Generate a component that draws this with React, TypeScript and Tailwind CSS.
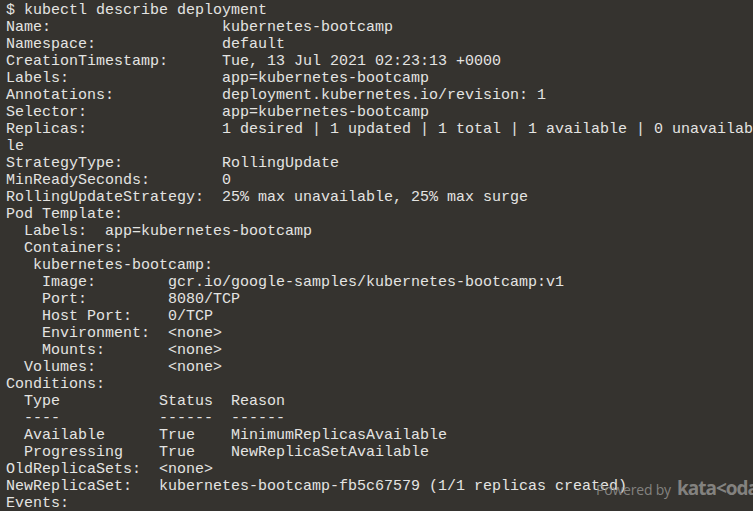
const lines = [
  '$ kubectl describe deployment',
  'Name:                   kubernetes-bootcamp',
  'Namespace:              default',
  'CreationTimestamp:      Tue, 13 Jul 2021 02:23:13 +0000',
  'Labels:                 app=kubernetes-bootcamp',
  'Annotations:            deployment.kubernetes.io/revision: 1',
  'Selector:               app=kubernetes-bootcamp',
  'Replicas:               1 desired | 1 updated | 1 total | 1 available | 0 unavailable',
  'StrategyType:           RollingUpdate',
  'MinReadySeconds:        0',
  'RollingUpdateStrategy:  25% max unavailable, 25% max surge',
  'Pod Template:',
  '  Labels:  app=kubernetes-bootcamp',
  '  Containers:',
  '   kubernetes-bootcamp:',
  '    Image:        gcr.io/google-samples/kubernetes-bootcamp:v1',
  '    Port:         8080/TCP',
  '    Host Port:    0/TCP',
  '    Environment:  <none>',
  '    Mounts:       <none>',
  '  Volumes:        <none>',
  'Conditions:',
  '  Type           Status  Reason',
  '  ----           ------  ------',
  '  Available      True    MinimumReplicasAvailable',
  '  Progressing    True    NewReplicaSetAvailable',
  'OldReplicaSets:  <none>',
  'NewReplicaSet:   kubernetes-bootcamp-fb5c67579 (1/1 replicas created)',
  'Events:',
];

export default function App() {
  return (
    <div className="relative w-[753px] h-[511px] overflow-hidden bg-[#35332f]">
      <pre className="w-[760px] pl-[6px] pt-[2px] font-['Liberation_Mono','Courier_New',monospace] text-[15px] leading-[17px] text-[#e4e4e2] whitespace-pre-wrap break-all">
        {lines.join('\n')}
      </pre>

      {/* katacoda watermark, sits over the terminal text */}
      <div className="absolute left-[596px] top-[474px] flex items-baseline gap-[6px] whitespace-nowrap font-['Open_Sans','Liberation_Sans',sans-serif] text-[#8c8b88] opacity-90">
        <span className="text-[14px] tracking-[-0.2px]">Powered by</span>
        <span className="text-[19px] font-bold tracking-[-1px]">kata&lt;oda</span>
      </div>
    </div>
  );
}
